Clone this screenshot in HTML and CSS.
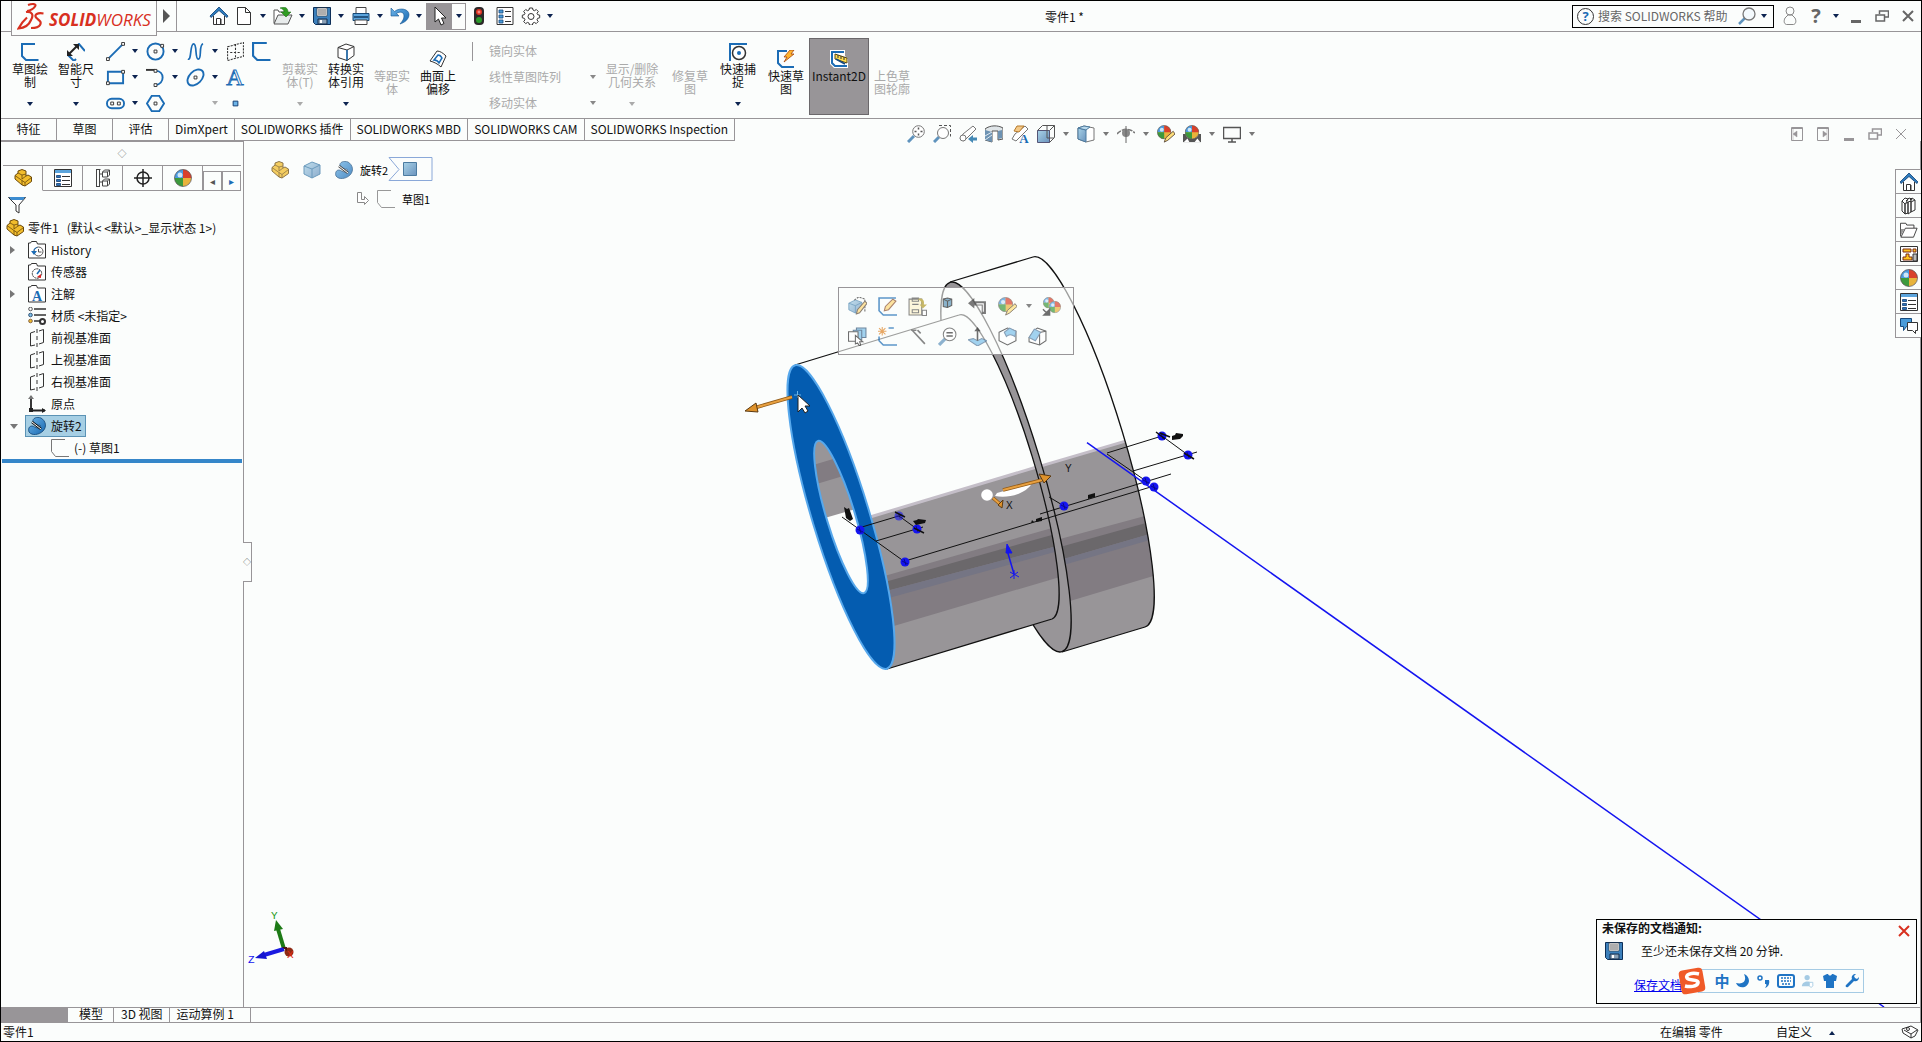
FILE: index.html
```html
<!DOCTYPE html>
<html lang="zh-CN">
<head>
<meta charset="utf-8">
<title>零件1</title>
<link rel="stylesheet" href="styles.css">
</head>
<body>
<svg class="sprite" aria-hidden="true">
  <defs>
    <linearGradient id="steel" x1="0" y1="0" x2="1" y2="1"><stop offset="0" stop-color="#a9d3e8"/><stop offset="1" stop-color="#6b93bd"/></linearGradient>
    <linearGradient id="sky" x1="0" y1="0" x2="1" y2="1"><stop offset="0" stop-color="#6cb4e8"/><stop offset="1" stop-color="#1767b0"/></linearGradient>
  </defs>
  <symbol id="i-down" viewBox="0 0 8 5"><path d="M1 0h6L4 4z" fill="currentColor"/></symbol>
  <symbol id="i-home" viewBox="0 0 18 18"><path d="M3.500 9v8.500h11V9" fill="#fff" stroke="#333"/><path d="M6.500 17.500v-6h4v6M11 17v-5" fill="none" stroke="#333"/><path d="M0 9 9 0l9 9-1 1.500-8-7-8 7z" fill="#2d7cbd" stroke="#0d3c72" stroke-width=".8"/></symbol>
  <symbol id="i-new" viewBox="0 0 18 18"><path d="M2.500.500h8l5 5v12h-13z" fill="#fff" stroke="#333"/><path d="M10.500.500v5h5" fill="none" stroke="#333"/></symbol>
  <symbol id="i-open" viewBox="0 0 20 18"><path d="M1 16V3h4l1 2h7v3" fill="#fff" stroke="#555"/><path d="M1 17 5 8h14l-4 9z" fill="#e8ecec" stroke="#555"/><path d="M7 1c5-2 8 0 8 4h3l-5 5-5-5h3c0-2-1-3-4-4z" fill="#2f9c22" stroke="#14630c" stroke-width=".5"/></symbol>
  <symbol id="i-save" viewBox="0 0 18 18"><path d="M.500.500h17v17h-15l-2-2z" fill="#3c80bb" stroke="#0d2f57"/><path d="M4 1h10v8H4z" fill="#fff" stroke="#333" stroke-width=".6"/><path d="M5 3h8M5 5h8M5 7h8" stroke="#333" stroke-width=".8"/><path d="M5 12h9v5H5z" fill="#8aa0b5" stroke="#122c4c"/><path d="M7 13h2v3H7z" fill="#fff"/></symbol>
  <symbol id="i-print" viewBox="0 0 18 18"><path d="M4 6V.500h10V6" fill="#fff" stroke="#444"/><path d="M1 6.500h16v7H1z" fill="#5ba4dc" stroke="#164876"/><path d="M2 10h14" stroke="#123c66" stroke-width="1.500"/><path d="M3 13h12v4.500H3z" fill="#fff" stroke="#444"/></symbol>
  <symbol id="i-undo" viewBox="0 0 18 18"><path d="M0 1v8h8L5.500 6.500C9 4 13 5 13 9c0 3-1.500 5-4 8 5-1.500 9-5 9-9.500C18 2 9 0 3.500 4.500z" fill="url(#sky)" stroke="#14548f" stroke-width=".6"/></symbol>
  <symbol id="i-pointer" viewBox="0 0 14 20"><path d="M2 1v15l3.500-3 2.500 6 3-1.500L8.500 12H13z" fill="#fff" stroke="#222"/></symbol>
  <symbol id="i-light" viewBox="0 0 12 18"><rect x="1" y="0" width="10" height="18" rx="4" fill="#2c2929"/><circle cx="6" cy="5" r="3" fill="#e23322"/><circle cx="6" cy="13" r="3" fill="#2b9a2b"/><path d="M4.500 5h3M6 3.500v3" stroke="#fbb" stroke-width=".8"/></symbol>
  <symbol id="i-list" viewBox="0 0 18 18"><path d="M1 .500h16v17H1z" fill="#fff" stroke="#333"/><path d="M3 3h4v3H3zM3 8h4v3H3zM3 13h4v3H3z" fill="#4a9bd8" stroke="#174a7d" stroke-width=".8"/><path d="M9 4.500h6M9 9.500h6M9 14.500h6" stroke="#333"/></symbol>
  <symbol id="i-gear" viewBox="0 0 18 18"><path d="M7.500 1h3l.5 2 1.500.700L14.300 2.500l2 2L15 6.300l.7 1.400 2 .5v2.600l-2 .5-.7 1.500 1.200 1.800-2 2-1.800-1.200-1.500.700-.5 2H7.500l-.5-2-1.500-.700-1.800 1.200-2-2L3 12.800l-.7-1.500-2-.5V8.200l2-.5L3 6.300 1.700 4.500l2-2L5.500 3.700 7 3z" fill="#fff" stroke="#333"/><circle cx="9" cy="9.500" r="3" fill="none" stroke="#333"/></symbol>
  <symbol id="i-sketch" viewBox="0 0 18 18"><path d="M14 1H1v12l4 4h12.500" fill="none" stroke="#1b6cb5" stroke-width="2"/></symbol>
  <symbol id="i-sketch-thin" viewBox="0 0 18 18"><path d="M14 .500H.500v12l4 5H18" fill="none" stroke="#777"/></symbol>
  <symbol id="i-dim" viewBox="0 0 18 18"><path d="m10 3 2-2 6 7M0 11l7 7 2-2" fill="none" stroke="#1b6cb5" stroke-width="2"/><path d="m2 11 8-8" stroke="#222" stroke-width="2"/><path d="M0 13V7l6 6zM12 1v6L6 1z" fill="#222"/></symbol>
  <symbol id="i-line" viewBox="0 0 20 20"><path d="M2 18 18 2" stroke="#1b6cb5" stroke-width="2"/><path d="M.500 16.500h3v3h-3zM16.500.500h3v3h-3z" fill="#fff" stroke="#333"/></symbol>
  <symbol id="i-circle" viewBox="0 0 20 20"><circle cx="10" cy="10" r="8.500" fill="none" stroke="#1b6cb5" stroke-width="2"/><path d="M8.500 8.500h3v3h-3zM15.500 2.500h3v3h-3z" fill="#fff" stroke="#333"/></symbol>
  <symbol id="i-spline" viewBox="0 0 20 20"><path d="M2 18C6 20 4 2 8 2s1 16 5 16S13 3 18 2" fill="none" stroke="#1b6cb5" stroke-width="1.800"/></symbol>
  <symbol id="i-plane" viewBox="0 0 18 18"><path d="M1.500 4.500 16.500.500v13l-15 4z" fill="none" stroke="#333" stroke-dasharray="2 1"/><path d="M9 2v14M4 10h10" stroke="#333" stroke-dasharray="2 1.500"/></symbol>
  <symbol id="i-rect" viewBox="0 0 20 20"><path d="M2 4h16v12H2z" fill="none" stroke="#1b6cb5" stroke-width="2"/><path d="M.500 14.500h3v3h-3zM16.500 2.500h3v3h-3z" fill="#fff" stroke="#333"/></symbol>
  <symbol id="i-arc" viewBox="0 0 20 20"><path d="M10 3c10 0 10 14 0 15" fill="none" stroke="#1b6cb5" stroke-width="2"/><path d="M0 2h10" stroke="#333" stroke-width="2"/><path d="M8.500 1.500h3v3h-3zM8.500 16.500h3v3h-3z" fill="#fff" stroke="#333"/></symbol>
  <symbol id="i-ellipse" viewBox="0 0 20 20"><ellipse cx="10" cy="10" rx="10" ry="6.500" transform="rotate(-45 10 10)" fill="none" stroke="#1b6cb5" stroke-width="2"/><path d="M8.500 8.500h3v3h-3z" fill="#fff" stroke="#333"/></symbol>
  <symbol id="i-slot" viewBox="0 0 20 20"><rect x="1" y="5" width="18" height="10" rx="5" fill="none" stroke="#1b6cb5" stroke-width="2"/><path d="M5 8.500h3v3H5zM12 8.500h3v3h-3z" fill="#fff" stroke="#333"/></symbol>
  <symbol id="i-poly" viewBox="0 0 20 20"><path d="M6 2h8l5 8-5 8H6l-5-8z" fill="none" stroke="#1b6cb5" stroke-width="2"/><path d="M8.500 8.500h3v3h-3z" fill="#fff" stroke="#333"/></symbol>
  <symbol id="i-point" viewBox="0 0 20 20"><path d="M7.500 7.500h5v5h-5z" fill="#6cb4e8" stroke="#123c72"/></symbol>
  <symbol id="i-cube" viewBox="0 0 18 18"><path d="M1 4.500 9 1l8 2.500v9L10 17.500l-9-3z" fill="#fff" stroke="#333"/><path d="M1 4.500 10 7l7-3.500M10 7v10.500" fill="none" stroke="#333"/><path d="M10 7v10" stroke="#1b6cb5" stroke-width="1.500"/></symbol>
  <symbol id="i-surf" viewBox="0 0 18 18"><path d="M1 11 8 1c3 0 6 2 9 5l-5 11C9 14 5 12 1 11z" fill="#fff" stroke="#333"/><path d="M5 10l4-5c2 0 3 1 4 3l-3 5c-1-2-3-3-5-3z" fill="#fff" stroke="#1b6cb5" stroke-width="1.500"/></symbol>
  <symbol id="i-snap" viewBox="0 0 18 18"><path d="M18 1H1v17" fill="none" stroke="#1b6cb5" stroke-width="2"/><circle cx="10" cy="10" r="6.500" fill="#fff" stroke="#333" stroke-width="1.500"/><circle cx="10" cy="10" r="2" fill="#1b6cb5"/></symbol>
  <symbol id="i-quick" viewBox="0 0 18 18"><path d="M10 1H1v12l4 4h12" fill="none" stroke="#1b6cb5" stroke-width="2"/><path d="M13 0h4l-3 4h3L7 12l3-5H7z" fill="#ffb52e" stroke="#a3420c" stroke-width=".8"/></symbol>
  <symbol id="i-instant" viewBox="0 0 18 18"><path d="M0 0h15v6l3 3v9H4l-4-4z" fill="#fff"/><path d="M14 2H2v11l3 3h12" fill="none" stroke="#1b6cb5" stroke-width="2"/><path d="m5 4 12 4v5L5 9z" fill="#ffdc4c" stroke="#5b4914"/><path d="M8 5v3M11 6v3M14 7v3" stroke="#333"/><path d="m6 9 9 5" stroke="#174a7d" stroke-width="2"/></symbol>
  <symbol id="i-zoomfit" viewBox="0 0 18 18"><path d="M1 17l6-6" stroke="#5f93bd" stroke-width="3"/><circle cx="11.500" cy="6.500" r="5.800" fill="#fff" stroke="#777"/><path d="M11.500 2.500v2M11.500 8.500v2M7.500 6.500h2M13.500 6.500h2" stroke="#555" stroke-width="1.500"/></symbol>
  <symbol id="i-zoomarea" viewBox="0 0 18 18"><path d="M6 .500h11.500v11" fill="none" stroke="#555" stroke-dasharray="3 2"/><path d="M1 17l5-5" stroke="#5f93bd" stroke-width="3"/><circle cx="10" cy="8" r="5.500" fill="#fff" stroke="#777"/></symbol>
  <symbol id="i-prev" viewBox="0 0 18 18"><path d="m1 14 3-5L14 1l3 3-8 8-4 4z" fill="#fff" stroke="#777"/><circle cx="4" cy="13" r="3" fill="#fff" stroke="#777"/><path d="M18 14h-4" stroke="#4589b5" stroke-width="3"/><path d="m9 14 5-4v8z" fill="#4589b5"/></symbol>
  <symbol id="i-section" viewBox="0 0 18 18"><path d="M0 4c5-4 13-4 18-1v11l-5 1V6H7v11l-7-2z" fill="#dfe5e8" stroke="#555"/><path d="M0 5l7 2v10l-7-2zM13 6l4-1v8l-4 1z" fill="#6d93b3"/><path d="m0 11 7-4M0 15l7-5" stroke="#dfe9f0"/></symbol>
  <symbol id="i-orient" viewBox="0 0 18 18"><path d="M.500 5.500h12v12H.500z" fill="url(#steel)" stroke="#557"/><path d="m.500 5.500 5-5h12v12l-5 5M12.500 5.500l5-5M10 1v12h7" fill="none" stroke="#555"/></symbol>
  <symbol id="i-shaded" viewBox="0 0 18 18"><path d="m1 3 6-2 10 2v12l-8 2-8-3z" fill="#fff" stroke="#777"/><path d="m1 3 8 2v12l-8-3z" fill="url(#steel)" stroke="#4c7ba0"/><path d="m1 3 6-2 6 1-4 3z" fill="#b7d8ec" stroke="#4c7ba0"/></symbol>
  <symbol id="i-eye" viewBox="0 0 18 18"><path d="M0 9c5-6 13-6 18-1" fill="none" stroke="#777" stroke-width="1.500" stroke-dasharray="5 1"/><circle cx="9" cy="8" r="4" fill="#888"/><path d="M9 1v17" stroke="#666"/></symbol>
  <symbol id="i-ball" viewBox="0 0 18 18"><circle cx="9" cy="9" r="8.500" fill="#e8b33c"/><path d="M9 9V.500a8.500 8.500 0 0 0-8.500 8.500z" fill="#4a9be0"/><path d="M9 9V.500A8.500 8.500 0 0 1 17.500 9z" fill="#d9402b"/><path d="M.500 9a8.500 8.500 0 0 0 8.500 8.500V9z" fill="#3c9a3c"/><circle cx="6" cy="6" r="2.500" fill="#cfe6f7"/><circle cx="9" cy="9" r="8.500" fill="none" stroke="#556" stroke-width=".7"/></symbol>
  <symbol id="i-ballpen" viewBox="0 0 20 20"><use href="#i-ball" width="16" height="16"/><path d="m8 19 2-5 8-7 2 3-8 7z" fill="#ffe07a" stroke="#5a4a3a"/></symbol>
  <symbol id="i-scene" viewBox="0 0 20 20"><path d="M0 10h20v9H0z" fill="#555"/><path d="M3 11h4l-2 3zM13 11h4l-2 3zM1 19l4-4 2 4zM13 19l3-4 3 4z" fill="#fff"/><use href="#i-ball" x="2" width="16" height="16"/></symbol>
  <symbol id="i-monitor" viewBox="0 0 18 18"><path d="M.500 2.500h17v11H.500zM9 14v3M5 17h8" fill="none" stroke="#555" stroke-width="1.500"/></symbol>
  <symbol id="i-part" viewBox="0 0 18 18"><path d="M1 6.500 4 4V2l4-1.500L12 2v5l2-1 3.500 2v4.500L11 17l-3-1-7-6z" fill="#f2bd2c" stroke="#6b4a0c"/><path d="m1 6.500 7 5V16M4 4l4 2 4-1M8 6v4l4-3M8 11.500l3 2 6.500-5M11 13.500V17" fill="none" stroke="#6b4a0c" stroke-width=".8"/></symbol>
  <symbol id="i-props" viewBox="0 0 18 18"><path d="M.500.500h17v17H.500z" fill="#fff" stroke="#333"/><path d="M1 1h16v3H1z" fill="#5ba4dc"/><path d="M2.500 6.500h4v2h-4zM2.500 10.500h4v2h-4zM2.500 14.500h4v2h-4z" fill="#2b72b8" stroke="#123c72" stroke-width=".8"/><path d="M8 7.500h8M8 11.500h8M8 15.500h8" stroke="#333"/></symbol>
  <symbol id="i-config" viewBox="0 0 18 18"><path d="M2.500.500h4M2.500 0v18M5.500 0v18M2 17.500h4M6 5h3M6 13h3" fill="none" stroke="#444"/><path d="m8.500 3 2-2h5v5l-2 2h-5zM8.500 12l2-2h5v5l-2 2h-5zM8.500 3h5v5M13.500 3l2-2M8.500 12h5v5M13.500 12l2-2" fill="none" stroke="#444"/></symbol>
  <symbol id="i-target" viewBox="0 0 18 18"><circle cx="9" cy="9" r="6" fill="none" stroke="#222" stroke-width="1.500"/><path d="M9 0v18M0 9h18" stroke="#222" stroke-width="1.500"/></symbol>
  <symbol id="i-filter" viewBox="0 0 18 18"><path d="M.500 1.500h17L11 9v8l-3-2V9z" fill="#fff" stroke="#333"/><path d="M1 1h16l-2 3H3z" fill="#3c8cd0"/></symbol>
  <symbol id="i-folder" viewBox="0 0 18 18"><path d="M.500 17V2h2l1-1.500h5L9.500 3h8v14z" fill="#fff" stroke="#333"/></symbol>
  <symbol id="i-history" viewBox="0 0 18 18"><use href="#i-folder"/><circle cx="10.500" cy="10.500" r="4.500" fill="#fff" stroke="#555"/><path d="M10.500 8v3h3" fill="none" stroke="#555"/><path d="M3 10h6l-3 4zM5 10c1-3 3-4 5-4" fill="#1b6cb5"/></symbol>
  <symbol id="i-sensor" viewBox="0 0 18 18"><use href="#i-folder"/><circle cx="9" cy="10.500" r="4.700" fill="#fff" stroke="#333" stroke-dasharray="2 .6"/><path d="m9 11 3-4" stroke="#1b6cb5" stroke-width="1.500"/><path d="m9 14 4-3v4z" fill="#d22"/></symbol>
  <symbol id="i-material" viewBox="0 0 18 18"><path d="M6 2h12M6 8h12M6 14h8" stroke="#333" stroke-width="1.500"/><circle cx="2.500" cy="2" r="1.800" fill="#fff" stroke="#555"/><circle cx="2.500" cy="8" r="1.800" fill="#7cc0ea" stroke="#357"/><circle cx="2.500" cy="14" r="1.800" fill="#f2bd2c" stroke="#864"/><circle cx="14.500" cy="14.500" r="2.500" fill="#fff" stroke="#333" stroke-width="2"/></symbol>
  <symbol id="i-refplane" viewBox="0 0 18 18"><path d="M7 2.500 2.500 4v13L7 16M11 2 15.500.500v13L11 15" fill="none" stroke="#333"/><path d="M9 0v18" stroke="#333" stroke-dasharray="4 3"/></symbol>
  <symbol id="i-origin" viewBox="0 0 18 18"><path d="M3 1v14.500h14" fill="none" stroke="#222" stroke-width="1.800"/><path d="m0 4 3-4 3 4z" fill="#777"/><path d="m14 13 4 2.500-4 2.500zM1 13h4v4H1z" fill="#222"/></symbol>
  <symbol id="i-revolve" viewBox="0 0 18 18"><path d="M5 5C4 1 9-.500 13 1c5 3 6 9 2 13-4 4-11 5-14 1-1-3 0-6 3-6 2 0 3 2 6 2 2-.500 3-2 2-3-2 1-6-1-7-3z" fill="url(#sky)" stroke="#0f4273" stroke-width=".8"/><path d="m4 5 9 7" stroke="#111" stroke-width="2.500"/><path d="m4 5 9 7" stroke="#fff"/></symbol>
  <symbol id="i-solid" viewBox="0 0 18 18"><path d="m1 5 8-4 8 3v9l-8 4-8-4z" fill="url(#steel)" stroke="#3d7ba8"/><path d="m1 5 8 3 8-4M9 8v9" fill="none" stroke="#3d7ba8"/></symbol>
  <symbol id="i-books" viewBox="0 0 18 18"><path d="m2 4 3 3v10l-3-3zM5 7l3-2v11l-3 1zM8 5v12l3-2V4zM11 15l4-2V3l-4 2zM2 4l3-3 3 1-2 4M6 4l3-3 3 1-2 3M10 3l2-2 3 2" fill="#fff" stroke="#333"/></symbol>
  <symbol id="i-folderopen" viewBox="0 0 20 18"><path d="M.500 16V1.500h6l1 2h8V7" fill="#fff" stroke="#333"/><path d="m1 17 5-10h13l-4 10z" fill="#fff" stroke="#333"/><path d="M1 8h4l-4 7z" fill="#999"/></symbol>
  <symbol id="i-palette" viewBox="0 0 18 18"><path d="M.500 1.500h17v15H.500z" fill="#fff" stroke="#333"/><path d="M3 4h8v3H3zM13 4h3v3h-3zM6 9h3v3h3v3H3v-3h3z" fill="#ffc41f" stroke="#7b2a16"/><path d="M13 9h4v7h-4z" fill="#bbb" stroke="#333"/></symbol>
  <symbol id="i-chat" viewBox="0 0 18 18"><path d="M.500 1.500h11v8h-5l-3 4v-4h-3z" fill="#4a9bd8" stroke="#174a7d"/><path d="M7.500 5.500h10v8h-2v3l-3-3h-5z" fill="#fff" stroke="#333"/></symbol>
  <symbol id="i-loupe" viewBox="0 0 18 18"><path d="m1 17 6-6" stroke="#5f93bd" stroke-width="2.500"/><circle cx="11" cy="7" r="6" fill="#f4fafd" stroke="#777" stroke-width="1.300"/></symbol>
  <symbol id="i-user" viewBox="0 0 14 20"><circle cx="7" cy="5" r="4" fill="none" stroke="#888"/><path d="M3.500 18.500C1 18 .500 15 2 12l3-3h4l3 3c1.500 3 1 6-1.500 6.500z" fill="none" stroke="#888"/></symbol>
  <symbol id="i-min" viewBox="0 0 14 14"><path d="M2 11h10v3H2z" fill="currentColor"/></symbol>
  <symbol id="i-restore" viewBox="0 0 14 14"><path d="M4.500 5V2h9v6H10M1 6h8.500v6H1z" fill="none" stroke="currentColor" stroke-width="1.500"/></symbol>
  <symbol id="i-close" viewBox="0 0 14 14"><path d="m2 2 10 10M12 2 2 12" stroke="currentColor" stroke-width="2"/></symbol>
  <symbol id="i-x" viewBox="0 0 14 14"><path d="m2 2 10 10M12 2 2 12" stroke="currentColor"/></symbol>
  <symbol id="i-boxl" viewBox="0 0 14 14"><path d="M1.500.500h11v13h-11zM1.500 1.500h11" fill="none" stroke="currentColor"/><path d="M7 4v6L3 7zM3 2v11" fill="currentColor" stroke="currentColor" stroke-width=".5"/></symbol>
  <symbol id="i-boxr" viewBox="0 0 14 14"><path d="M1.500.500h11v13h-11zM1.500 1.500h11" fill="none" stroke="currentColor"/><path d="M7 4v6l4-3zM11 2v11" fill="currentColor" stroke="currentColor" stroke-width=".5"/></symbol>
  <symbol id="i-editfeat" viewBox="0 0 18 18"><use href="#i-solid" y="2" width="14" height="14"/><path d="M6 3 10 0l6 2v12" fill="none" stroke="#333" stroke-dasharray="2 1"/><path d="m8 16 1-4 7-8 2 2-7 9z" fill="#ffd978" stroke="#5a4a3a"/></symbol>
  <symbol id="i-editsk" viewBox="0 0 18 18"><path d="M17 1H1v12l4 4h13" fill="none" stroke="#1b6cb5" stroke-width="1.500"/><path d="m6 13 1-4 7-7 3 2-7 8z" fill="#ffd978" stroke="#8a5030"/></symbol>
  <symbol id="i-paste" viewBox="0 0 18 18"><path d="M1 2h12v15H1zM4 1h6v3H4zM4 7h6M4 12h6v3H4z" fill="#fff5cf" stroke="#555"/><path d="M9 2c4-2 7 1 6 5h3l-4 4-3-4h2c0-2-1-4-4-5z" fill="#b09a28"/><path d="M13.500 12.500h4v5h-4z" fill="#fff" stroke="#555"/></symbol>
  <symbol id="i-suppress" viewBox="0 0 18 18"><path d="m5 2 4-1 4 1v6l-4 2-4-1z" fill="#5b93b5" stroke="#222"/><path d="m5 2 4 2 4-2M9 4v6" fill="none" stroke="#222"/></symbol>
  <symbol id="i-rollback" viewBox="0 0 18 18"><path d="m0 6 6-5v3h11v12h-4V8H6v3z" fill="#444"/><path d="M8 6h7v8h-1V7H8z" fill="#fff"/></symbol>
  <symbol id="i-balls" viewBox="0 0 20 20"><use href="#i-ball" x="1" width="12" height="12"/><use href="#i-ball" x="7" y="4" width="13" height="13"/><path d="m1 13 5 5M8 13v6H2z" stroke="#333" stroke-width="1.500" fill="#333"/></symbol>
  <symbol id="i-selother" viewBox="0 0 18 18"><path d="M8 1h9v9H8z" fill="#7cc0ea" stroke="#357"/><path d="M5 3h8v9H5z" fill="#7cc0ea" stroke="#357"/><path d="M.500 4.500h9v9h-9z" fill="#fff" stroke="#333"/><path d="M7 8v8l2-1 2 3 1-1-1-3h3z" fill="#fff" stroke="#333"/></symbol>
  <symbol id="i-sknew" viewBox="0 0 18 18"><path d="M10 1h5M1 9v4l4 4h13" fill="none" stroke="#1b6cb5" stroke-width="1.500"/><path d="M4 0v8M0 4h8M1 1l6 6M7 1 1 7" stroke="#e08424"/></symbol>
  <symbol id="i-mate" viewBox="0 0 18 18"><path d="M4 3 16 16M3 3h5M9 3l3 3" stroke="#555" stroke-width="1.500"/></symbol>
  <symbol id="i-zoomsel" viewBox="0 0 18 18"><path d="m1 17 6-6" stroke="#5f93bd" stroke-width="3"/><circle cx="11" cy="7" r="6" fill="#fff" stroke="#555"/><path d="M8 5.500h6M8 8.500h6" stroke="#333" stroke-width="1.500"/></symbol>
  <symbol id="i-normal" viewBox="0 0 18 18"><path d="M0 12l5-1 4 2 4-2 5 2-9 5z" fill="#7cc0ea" stroke="#579"/><path d="M9 13V2" stroke="#333" stroke-width="1.500"/><path d="m6 4 3-4 3 4z" fill="#333"/></symbol>
  <symbol id="i-topface" viewBox="0 0 18 18"><path d="m1 5 8-4 8 3v9l-8 4-8-4z" fill="#fff" stroke="#333"/><path d="m6 5 5-4 6 3-1 5c-3-2-6-2-8 0z" fill="#7cc0ea" stroke="#579"/></symbol>
  <symbol id="i-sideface" viewBox="0 0 18 18"><path d="m1 10 5-7 3-2 8 3v9l-6 4-10-3z" fill="#fff" stroke="#333"/><path d="m1 10 5-8 6 3-5 8z" fill="#7cc0ea" stroke="#579"/><path d="M11 7v10M12 5l5-1" stroke="#333"/></symbol>
  <symbol id="i-kb" viewBox="0 0 18 14"><rect x="1" y="1" width="16" height="12" rx="2" fill="none" stroke="#1f74c4" stroke-width="2"/><path d="M4 4h10M4 7h10M5 10h8" stroke="#1f74c4" stroke-width="1.500" stroke-dasharray="2 1"/></symbol>
  <symbol id="i-moon" viewBox="0 0 14 14"><path d="M9 0c3 6 0 11-8 9 2 6 12 6 13-2 0-3-2-6-5-7z" fill="#1f74c4"/></symbol>
  <symbol id="i-punct" viewBox="0 0 14 14"><circle cx="3" cy="4" r="2" fill="none" stroke="#1f74c4" stroke-width="1.500"/><path d="M8 6h4c1 4-1 7-4 8 1-2 2-3 1-4H8z" fill="#1f74c4"/></symbol>
  <symbol id="i-person" viewBox="0 0 14 16"><circle cx="6" cy="4" r="3" fill="#a5cbe4"/><path d="M0 14c0-7 12-7 12-1v1z" fill="#a5cbe4"/><path d="M8.500 9.500h4v4l-2 2-2-2z" fill="#fff" stroke="#a5cbe4"/></symbol>
  <symbol id="i-shirt" viewBox="0 0 14 14"><path d="M4 0h1c1 2 3 2 4 0h1l4 2-1 5h-2v7H3V7H1L0 2z" fill="#1f74c4"/></symbol>
  <symbol id="i-wrench" viewBox="0 0 14 14"><path d="m1 11 6-6c-1-3 1-5 4-5L9 2l1 2 2 1 2-2c0 4-3 5-5 4l-6 6c-2 1-3-1-2-2z" fill="#1f74c4"/></symbol>
</svg>

<header class="titlebar">
  <div class="brand">
    <svg class="ds" viewBox="0 0 27 28" aria-hidden="true"><path d="M11 3c4-1.500 9-1.500 7 1.500-2 3-5 4-8 4.500M9 10c6-1 8 3 5 8-2 5-7 8-12.500 8.500C4 22 6 19 10 15.500M26.500 11.500c-6-1-9.500 1-7.500 4 3 3 6 4 4 7.500-1 2-5 3-9 3" fill="none" stroke="#d8301f" stroke-width="2.200"/></svg>
    <span class="wordmark"><b>SOLID</b>WORKS</span>
  </div>
  <button class="expand" aria-label="展开菜单"></button>
  <nav class="quick">
    <button class="q home" aria-label="主页"><svg><use href="#i-home"/></svg></button>
    <button class="q" aria-label="新建"><svg><use href="#i-new"/></svg></button><button class="dd" aria-label="新建选项"><svg><use href="#i-down"/></svg></button>
    <button class="q" aria-label="打开"><svg><use href="#i-open"/></svg></button><button class="dd" aria-label="打开选项"><svg><use href="#i-down"/></svg></button>
    <button class="q" aria-label="保存"><svg><use href="#i-save"/></svg></button><button class="dd" aria-label="保存选项"><svg><use href="#i-down"/></svg></button>
    <button class="q" aria-label="打印"><svg><use href="#i-print"/></svg></button><button class="dd" aria-label="打印选项"><svg><use href="#i-down"/></svg></button>
    <button class="q" aria-label="撤销"><svg><use href="#i-undo"/></svg></button><button class="dd" aria-label="撤销选项"><svg><use href="#i-down"/></svg></button>
    <span class="pick"><button class="q on" aria-label="选择"><svg><use href="#i-pointer"/></svg></button><button class="dd" aria-label="选择选项"><svg><use href="#i-down"/></svg></button></span>
    <button class="q" aria-label="重建"><svg><use href="#i-light"/></svg></button>
    <button class="q wide" aria-label="文件属性"><svg><use href="#i-list"/></svg></button>
    <button class="q" aria-label="选项"><svg><use href="#i-gear"/></svg></button><button class="dd" aria-label="更多选项"><svg><use href="#i-down"/></svg></button>
  </nav>
  <h1 class="doc-title">零件1 *</h1>
  <div class="title-end">
    <form class="search"><span class="q-mark">?</span><input type="text" aria-label="搜索" placeholder="搜索 SOLIDWORKS 帮助"><svg class="i18"><use href="#i-loupe"/></svg><svg class="caret"><use href="#i-down"/></svg></form>
    <button class="wb user" aria-label="登录"><svg><use href="#i-user"/></svg></button>
    <button class="wb help" aria-label="帮助">?</button><button class="dd" aria-label="帮助选项"><svg><use href="#i-down"/></svg></button>
    <button class="wb" aria-label="最小化"><svg><use href="#i-min"/></svg></button>
    <button class="wb" aria-label="还原"><svg><use href="#i-restore"/></svg></button>
    <button class="wb" aria-label="关闭"><svg><use href="#i-close"/></svg></button>
  </div>
</header>

<section class="ribbon">
  <button class="big"><svg><use href="#i-sketch"/></svg><span>草图绘<br>制</span><i class="caret-box"><svg><use href="#i-down"/></svg></i></button>
  <button class="big"><svg><use href="#i-dim"/></svg><span>智能尺<br>寸</span><i class="caret-box"><svg><use href="#i-down"/></svg></i></button>
  <div class="tools">
    <button aria-label="直线"><svg><use href="#i-line"/></svg></button><svg class="caret"><use href="#i-down"/></svg>
    <button aria-label="圆"><svg><use href="#i-circle"/></svg></button><svg class="caret"><use href="#i-down"/></svg>
    <button aria-label="样条曲线"><svg><use href="#i-spline"/></svg></button><svg class="caret"><use href="#i-down"/></svg>
    <button aria-label="基准面"><svg><use href="#i-plane"/></svg></button>
    <button aria-label="草图"><svg><use href="#i-sketch"/></svg></button>
    <button aria-label="矩形"><svg><use href="#i-rect"/></svg></button><svg class="caret"><use href="#i-down"/></svg>
    <button aria-label="圆弧"><svg><use href="#i-arc"/></svg></button><svg class="caret"><use href="#i-down"/></svg>
    <button aria-label="椭圆"><svg><use href="#i-ellipse"/></svg></button><svg class="caret"><use href="#i-down"/></svg>
    <button class="letter">A</button><span></span>
    <button aria-label="槽口"><svg><use href="#i-slot"/></svg></button><svg class="caret"><use href="#i-down"/></svg>
    <button aria-label="多边形"><svg><use href="#i-poly"/></svg></button><span></span>
    <span></span><svg class="caret dim"><use href="#i-down"/></svg>
    <button aria-label="点"><svg><use href="#i-point"/></svg></button><span></span>
  </div>
  <button class="big off noicon" disabled><span>剪裁实<br>体(T)</span><i class="caret-box"><svg><use href="#i-down"/></svg></i></button>
  <button class="big"><svg><use href="#i-cube"/></svg><span>转换实<br>体引用</span><i class="caret-box"><svg><use href="#i-down"/></svg></i></button>
  <button class="big off mid noicon" disabled><span>等距实<br>体</span></button>
  <button class="big mid"><svg><use href="#i-surf"/></svg><span>曲面上<br>偏移</span></button>
  <div class="rule"></div>
  <div class="lines off">
    <button disabled>镜向实体</button>
    <button disabled>线性草图阵列<svg class="caret"><use href="#i-down"/></svg></button>
    <button disabled>移动实体<svg class="caret"><use href="#i-down"/></svg></button>
  </div>
  <button class="big off noicon relations" disabled><span>显示/删除<br>几何关系</span><i class="caret-box"><svg><use href="#i-down"/></svg></i></button>
  <button class="big off mid noicon" disabled><span>修复草<br>图</span></button>
  <button class="big snap"><svg><use href="#i-snap"/></svg><span>快速捕<br>捉</span><i class="caret-box"><svg><use href="#i-down"/></svg></i></button>
  <button class="big mid"><svg><use href="#i-quick"/></svg><span>快速草<br>图</span></button>
  <button class="big mid active"><svg><use href="#i-instant"/></svg><span>Instant2D</span></button>
  <button class="big off mid noicon" disabled><span>上色草<br>图轮廓</span></button>
</section>

<div class="tabrow">
  <nav class="tabs">
    <button>特征</button><button class="current">草图</button><button>评估</button><button>DimXpert</button><button>SOLIDWORKS 插件</button><button>SOLIDWORKS MBD</button><button>SOLIDWORKS CAM</button><button>SOLIDWORKS Inspection</button>
  </nav>
  <div class="hud">
    <button aria-label="整屏显示全图"><svg><use href="#i-zoomfit"/></svg></button>
    <button aria-label="局部放大"><svg><use href="#i-zoomarea"/></svg></button>
    <button aria-label="上一视图"><svg><use href="#i-prev"/></svg></button>
    <button aria-label="剖面视图"><svg><use href="#i-section"/></svg></button>
    <button aria-label="动态注解"><svg viewBox="0 0 18 18"><path d="m1 14 3-5L14 1l3 3-8 8-4 4z" fill="#fff" stroke="#777"/><path d="m3 6 3-5h7l-5 6z" fill="#f4c987" stroke="#b57a2d"/><text x="13" y="18" text-anchor="middle" class="serif-a" font-size="13">A</text></svg></button>
    <button aria-label="视图定向"><svg><use href="#i-orient"/></svg></button><svg class="caret"><use href="#i-down"/></svg>
    <button aria-label="显示样式"><svg><use href="#i-shaded"/></svg></button><svg class="caret"><use href="#i-down"/></svg>
    <button aria-label="隐藏项目"><svg><use href="#i-eye"/></svg></button><svg class="caret"><use href="#i-down"/></svg>
    <button aria-label="编辑外观"><svg><use href="#i-ballpen"/></svg></button>
    <button aria-label="应用布景"><svg><use href="#i-scene"/></svg></button><svg class="caret"><use href="#i-down"/></svg>
    <button aria-label="视图设定"><svg><use href="#i-monitor"/></svg></button><svg class="caret"><use href="#i-down"/></svg>
  </div>
  <div class="docwin">
    <button aria-label="左侧窗格"><svg><use href="#i-boxl"/></svg></button>
    <button aria-label="右侧窗格"><svg><use href="#i-boxr"/></svg></button>
    <button aria-label="最小化文档"><svg><use href="#i-min"/></svg></button>
    <button aria-label="还原文档"><svg><use href="#i-restore"/></svg></button>
    <button aria-label="关闭文档"><svg><use href="#i-x"/></svg></button>
  </div>
</div>

<main class="work">
  <aside class="side">
    <div class="grip">◇</div>
    <nav class="sidetabs">
      <button class="current" aria-label="设计树"><svg><use href="#i-part"/></svg></button>
      <button aria-label="属性"><svg><use href="#i-props"/></svg></button>
      <button aria-label="配置"><svg><use href="#i-config"/></svg></button>
      <button aria-label="尺寸专家"><svg><use href="#i-target"/></svg></button>
      <button aria-label="外观"><svg><use href="#i-ball"/></svg></button>
      <span class="scroll"><button aria-label="向左">◂</button><button class="blue" aria-label="向右">▸</button></span>
    </nav>
    <div class="filter"><svg class="i18"><use href="#i-filter"/></svg></div>
    <div class="root"><svg class="i18"><use href="#i-part"/></svg><span>零件1&nbsp;&nbsp; (默认&lt; &lt;默认&gt;_显示状态 1&gt;)</span></div>
    <ul class="tree">
      <li><i class="tw"></i><span class="node"><svg><use href="#i-history"/></svg>History</span></li>
      <li><span class="node"><svg><use href="#i-sensor"/></svg>传感器</span></li>
      <li><i class="tw"></i><span class="node"><svg viewBox="0 0 18 18"><use href="#i-folder" width="18" height="18"/><text x="9" y="16" text-anchor="middle" class="serif-a" font-size="14">A</text></svg>注解</span></li>
      <li><span class="node"><svg><use href="#i-material"/></svg>材质 &lt;未指定&gt;</span></li>
      <li><span class="node"><svg><use href="#i-refplane"/></svg>前视基准面</span></li>
      <li><span class="node"><svg><use href="#i-refplane"/></svg>上视基准面</span></li>
      <li><span class="node"><svg><use href="#i-refplane"/></svg>右视基准面</span></li>
      <li><span class="node"><svg><use href="#i-origin"/></svg>原点</span></li>
      <li><i class="tw open"></i><span class="node selected"><svg><use href="#i-revolve"/></svg>旋转2</span></li>
      <li class="child"><span class="node"><svg><use href="#i-sketch-thin"/></svg>(-) 草图1</span></li>
    </ul>
    <div class="rollbar"></div>
    <button class="handle" aria-label="收起">◇</button>
  </aside>

  <section class="view">
    <svg class="scene" viewBox="244 141 1676 866" preserveAspectRatio="xMinYMin meet">
      <defs>
        <clipPath id="boss"><path d="M795 365 959 315A28.600 158.900-16.850 0 1 1052 619L887 669z"/></clipPath>
        <clipPath id="flange"><path d="M950 282 1033 257A34.800 193-16.850 0 1 1145 627L1062 652z"/></clipPath>
        <clipPath id="bore"><ellipse cx="841" cy="517" rx="14.300" ry="79.500" transform="rotate(-16.850 841 517)"/></clipPath>
        <clipPath id="ringclip"><ellipse cx="1006" cy="467" rx="34.800" ry="193" transform="rotate(-16.850 1006 467)"/></clipPath>
        <g id="dot"><circle r="4.500" fill="#1414f0"/><path d="M-3-1l6 3M-1-3l2 6" stroke="#0a0a8c"/></g>
      </defs>
      <g clip-path="url(#flange)">
        <path d="M1000 478 1160 431V700H1000z" fill="#989598"/>
        <path d="M1000 478 1160 431" stroke="#c4bec8" stroke-width="3"/>
        <path d="M1060 539 1160 512V574L1060 604z" fill="#827c82"/>
        <path d="M1060 547 1160 519V531L1060 560z" fill="#6b686b"/>
        <path d="M1060 560 1160 531V537L1060 566z" fill="#757584"/>
      </g>
      <path d="M950 282 1033 257A34.800 193-16.850 0 1 1145 627L1062 652" fill="none" stroke="#111" stroke-width="1.300"/>
      <ellipse cx="1006" cy="467" rx="34.800" ry="193" transform="rotate(-16.850 1006 467)" fill="#989598"/>
      <path d="M900 288h180v67H900z" fill="#fbfdfc" clip-path="url(#ringclip)"/>
      <ellipse cx="1006" cy="467" rx="34.800" ry="193" transform="rotate(-16.850 1006 467)" fill="none" stroke="#111" stroke-width="1.300"/>
      <path d="M795 365 959 315A28.600 158.900-16.850 0 1 1052 619L887 669z" fill="#fbfdfc"/>
      <g clip-path="url(#boss)">
        <path d="M860 520 1080 454V700H860z" fill="#989598"/>
        <path d="M860 520 1080 454" stroke="#c4bec8" stroke-width="3"/>
        <path d="M860 583 1080 520V571L860 636z" fill="#827c82"/>
        <path d="M860 589 1080 527V540L860 598z" fill="#6b686b"/>
        <path d="M860 598 1080 540V545L860 606z" fill="#757584"/>
      </g>
      <path d="M795 365 959 315A28.600 158.900-16.850 0 1 1052 619L887 669" fill="none" stroke="#111" stroke-width="1.300"/>
      <ellipse cx="841" cy="517" rx="28.600" ry="158.500" transform="rotate(-16.850 841 517)" fill="#045cb0" stroke="#57a8ec" stroke-width="2"/>
      <g clip-path="url(#bore)">
        <path d="M800 430h80v170h-80z" fill="#fbfdfc"/>
        <path d="M800 430h80v72l-80 23z" fill="#989598"/>
        <path d="M800 469l60-18v20l-60 18z" fill="#827c82"/>
      </g>
      <ellipse cx="841" cy="517" rx="14.300" ry="79.500" transform="rotate(-16.850 841 517)" fill="none" stroke="#57a8ec" stroke-width="2"/>
      <g fill="none" stroke="#111">
        <path d="M862 527 902 515M876 541 923 527M842 517 905 562M899 516 917 529M905 561 1154 486M1040 514 1171 474M1049 497 1064 506M1107 453 1162 436M1133 471 1197 452M1162 436 1188 455M1107 454 1146 481"/>
      </g>
      <path d="M1087 442.700 1884 1007" stroke="#1414f0" stroke-width="1.500"/>
      <use href="#dot" x="860" y="530"/><use href="#dot" x="917" y="529"/><use href="#dot" x="899" y="516" opacity=".6"/><use href="#dot" x="905" y="562"/><use href="#dot" x="1064" y="506"/><use href="#dot" x="1146" y="481"/><use href="#dot" x="1154" y="487"/><use href="#dot" x="1188" y="455"/><use href="#dot" x="1162" y="436"/>
      <path d="M1160 433l10 4M1156 432l9 7M1184 453l10 6M914 528l10 5M895 512l10 5" stroke="#111" stroke-width="1.500"/>
      <g fill="#111"><path d="m1172 436 3-1 1-2 7 1v2l-3 3-8 1zM844 507l3 2 2-1 4 11-3 2-4-3zM913 521l4-1 1-1 8 1-1 3-9 2zM1088 495l7-2 0 4-7 2zM1036 519l6-2v4l-6 1zM1032 520l2 2-3 1z"/></g>
      <path d="M995 496c14 3 32-3 37-13l-35 10z" fill="#fff"/>
      <circle cx="987" cy="495" r="5.800" fill="#fff"/>
      <path d="M792 397 754 408M1003 490 1042 480M993 498l7 6" stroke="#8f5a18" stroke-width="3.500"/>
      <path d="M792 397 754 408M1003 490 1042 480M993 498l7 6" stroke="#e8a040" stroke-width="2"/>
      <path d="M745 411 756 403 758 412zM1051 476 1039 474 1044 483zM1002 508l-4-3 5-5z" fill="#de922c" stroke="#5c3a10"/>
      <path d="m1014 574-7-24" stroke="#1414f0" stroke-width="1.500"/>
      <path d="m1007 544-1 9h6zM1010 572l9 5M1010 578l8-6M1014 570v9" fill="#1414f0" stroke="#1414f0"/>
      <g font-family="Liberation Sans, sans-serif" font-size="10" fill="#111"><text x="1065" y="472">Y</text><text x="1006" y="509">X</text></g>
      <path d="M794 395h7M797.500 391v7" stroke="#6cb4e8"/>
      <path d="M798 395v17l4-4 3 5 3-2-3-5h5z" fill="#fff" stroke="#222"/>
      <path d="m284 949-6-20" stroke="#1d7a16" stroke-width="4"/><path d="m276 920-2 11 9-2z" fill="#1d7a16"/>
      <path d="m284 949-20 6" stroke="#1a1ae0" stroke-width="4"/><path d="m255 958 9-7 3 8z" fill="#1414d0"/>
      <circle cx="289" cy="952" r="4.500" fill="#8e2a14"/><path d="M282 947h5v4z" fill="#4c1410"/>
      <g font-family="Liberation Mono, monospace" font-size="11"><text x="271" y="919" fill="#1d9a16">Y</text><text x="248" y="963" fill="#1414f0">Z</text><text x="287" y="958" fill="#e02a18">X</text></g>
    </svg>

    <nav class="crumbs">
      <div class="crumb-row"><svg class="i18"><use href="#i-part"/></svg><svg class="i18"><use href="#i-solid"/></svg><svg class="i18"><use href="#i-revolve"/></svg><span>旋转2</span>
        <svg class="chev" viewBox="0 0 45 25"><path d="M1 .500h43v23H1l10-11z" fill="none" stroke="#8aa8d8"/><path d="M15.500 5.500h13v13h-13z" fill="url(#steel)" stroke="#4c7ba0"/></svg></div>
      <div class="crumb-row sub"><svg class="turn" viewBox="0 0 12 14"><path d="M.500.500h4v7h3v-3l4 4-4 4v-2h-7z" fill="#fff" stroke="#888"/></svg><svg class="i18"><use href="#i-sketch-thin"/></svg><span>草图1</span></div>
    </nav>

    <div class="context">
      <div class="ctx-row">
        <button aria-label="编辑特征"><svg><use href="#i-editfeat"/></svg></button><button aria-label="编辑草图"><svg><use href="#i-editsk"/></svg></button><button aria-label="粘贴"><svg><use href="#i-paste"/></svg></button><button aria-label="压缩"><svg><use href="#i-suppress"/></svg></button><button aria-label="退回"><svg><use href="#i-rollback"/></svg></button><button aria-label="外观"><svg><use href="#i-ballpen"/></svg></button><svg class="caret"><use href="#i-down"/></svg><button aria-label="复制外观"><svg><use href="#i-balls"/></svg></button>
      </div>
      <div class="ctx-row">
        <button aria-label="选择其它"><svg><use href="#i-selother"/></svg></button><button aria-label="草图绘制"><svg><use href="#i-sknew"/></svg></button><button aria-label="配合"><svg><use href="#i-mate"/></svg></button><button aria-label="放大所选"><svg><use href="#i-zoomsel"/></svg></button><button aria-label="正视于"><svg><use href="#i-normal"/></svg></button><button aria-label="圆角"><svg><use href="#i-topface"/></svg></button><button aria-label="倒角"><svg><use href="#i-sideface"/></svg></button>
      </div>
    </div>

    <nav class="taskpane">
      <button aria-label="资源"><svg><use href="#i-home"/></svg></button><button aria-label="设计库"><svg><use href="#i-books"/></svg></button><button aria-label="文件"><svg><use href="#i-folderopen"/></svg></button><button aria-label="视图调色板"><svg><use href="#i-palette"/></svg></button><button aria-label="外观"><svg><use href="#i-ball"/></svg></button><button aria-label="自定义属性"><svg><use href="#i-props"/></svg></button><button aria-label="论坛"><svg><use href="#i-chat"/></svg></button>
    </nav>

    <section class="notice">
      <div class="notice-head"><h2>未保存的文档通知:</h2><button aria-label="关闭通知"><svg><use href="#i-close"/></svg></button></div>
      <div class="notice-body"><svg class="i18"><use href="#i-save"/></svg><p>至少还未保存文档 20 分钟.</p></div>
      <a href="#save">保存文档</a>
      <div class="ime">
        <svg class="sogou" viewBox="0 0 28 28"><rect x="2" y="2" width="24" height="24" rx="4" fill="#f05a28" transform="rotate(-10 14 14)"/><path d="M21 7c-8-2-14 1-12 4s12 1 11 5-9 4-13 3" fill="none" stroke="#fff" stroke-width="3.500"/></svg>
        <b>中</b><svg><use href="#i-moon"/></svg><svg><use href="#i-punct"/></svg><svg class="kb"><use href="#i-kb"/></svg><svg><use href="#i-person"/></svg><svg><use href="#i-shirt"/></svg><svg><use href="#i-wrench"/></svg>
      </div>
    </section>
  </section>
</main>

<nav class="bottomtabs"><span class="block"></span><button class="current">模型</button><button>3D 视图</button><button>运动算例 1</button></nav>
<footer class="status"><span class="grow">零件1</span><span class="editing">在编辑 零件</span><span class="custom">自定义</span><svg class="caret up"><use href="#i-down"/></svg><svg class="tag" viewBox="0 0 18 14"><path d="m1 4 9-3 7 4-3 6-4 2-8-5z" fill="#fff" stroke="#333"/><path d="m3 5 7 4 6-4M10 9v4" fill="none" stroke="#333"/><circle cx="7" cy="4" r="1.500" fill="none" stroke="#333"/></svg></footer>
</body>
</html>
```
FILE: styles.css
```css
* { box-sizing: border-box; }
body {
  margin: 0;
  min-height: 100vh;
  display: flex;
  flex-direction: column;
  border: 1px solid #000;
  background: #fbfdfc;
  color: #111;
  font: 12px/16px "Noto Sans CJK SC", sans-serif;
}
button { border: 0; padding: 0; background: none; font: inherit; color: inherit; display: flex; align-items: center; justify-content: center; }
svg { display: block; flex: none; }
h1, h2, p, ul { margin: 0; padding: 0; font: inherit; list-style: none; }
.sprite { position: absolute; width: 0; height: 0; }
.caret, .dd svg, .caret-box svg { width: 8px; height: 5px; color: #0c2350; }
.i18 { width: 18px; height: 18px; }
.serif-a { font-family: "Liberation Serif", serif; font-weight: bold; fill: #1b6cb5; }

/* title bar */
.titlebar { display: flex; height: 31px; border-bottom: 1px solid #989598; }
.brand { position: relative; z-index: 1; display: flex; align-items: center; gap: 5px; width: 146px; height: 35px; margin-left: 10px; padding-left: 5px; background: #fbfdfc; border: 1px solid #989598; border-top: 0; }
.ds { width: 27px; height: 28px; margin-bottom: 5px; }
.wordmark { font: italic 17px/20px "Open Sans", sans-serif; color: #d8301f; margin-bottom: -4px; }
.expand { width: 20px; border-right: 1px solid #989598; }
.expand::before { content: ""; border: 7px solid transparent; border-left-color: #555; border-right: 0; }
.quick { display: flex; align-items: center; margin-left: 29px; }
.q { width: 25px; height: 27px; }
.q svg { width: 20px; height: 18px; }
.dd { width: 14px; height: 26px; }
.pick { display: flex; border: 1px solid #989598; }
.pick .q { height: 25px; }
.pick .q svg { height: 20px; }
.pick .dd { width: 13px; height: 25px; }
.q.on { background: #989598; }
.q.wide { width: 27px; }
.doc-title { flex: 1; text-align: center; line-height: 32px; }
.title-end { display: flex; align-items: center; }
.search { display: flex; align-items: center; width: 202px; height: 23px; margin-right: 3px; padding: 0 4px; border: 1px solid #000; }
.q-mark { width: 17px; height: 17px; border: 1px solid #333; border-radius: 50%; text-align: center; font: bold 13px/15px "Open Sans", sans-serif; color: #1b6cb5; }
.search input { width: 144px; padding: 0 0 0 4px; border: 0; outline: 0; background: none; font: inherit; color: #555; }
.search input::placeholder { color: #666; opacity: 1; }
.search .caret { margin-left: 4px; }
.wb { width: 26px; height: 27px; color: #666; }
.wb svg { width: 14px; height: 14px; }
.wb.user svg { height: 20px; }
.help { font: bold 20px/24px "Open Sans", sans-serif; }

/* ribbon */
.ribbon { display: flex; height: 87px; padding: 6px 0 3px 6px; border-bottom: 1px solid #989598; }
.big { flex-direction: column; justify-content: flex-start; width: 46px; padding-top: 5px; line-height: 13px; }
.big > svg { width: 18px; height: 18px; margin-bottom: 1px; }
.big > span { height: 26px; white-space: nowrap; }
.big.noicon { padding-top: 24px; }
.caret-box { margin-top: 14px; }
.big.mid { padding-top: 12px; }
.big.mid.noicon { padding-top: 31px; }
.off, .off .caret, .off .caret-box svg, .dim.caret { color: #aaa; }
.off .caret { color: #888; }
.big.active { width: 60px; padding-top: 11px; background: #989598; border: 1px solid #6b686b; }
.big.snap { width: 50px; }
.tools { display: grid; grid-template: repeat(3, 26px) / 32px 8px 32px 8px 32px 8px 32px 20px; align-items: center; justify-items: center; margin-right: 6px; }
.tools button svg { width: 19px; height: 19px; }
.letter { height: 24px; font: 24px/24px "Liberation Serif", serif; color: #fbfdfc; -webkit-text-stroke: 1px #1b6cb5; }
.rule { width: 1px; height: 19px; margin: 4px 16px 0 11px; background: #989598; }
.lines { width: 108px; display: grid; grid-template-rows: repeat(3, 26px); }
.lines button { justify-content: space-between; }
.relations { width: 70px; }

/* command tabs and view toolbar */
.tabrow { display: flex; height: 22px; }
.tabs { display: flex; border-bottom: 1px solid #989598; }
.tabs button { min-width: 56px; padding: 0 6px; border-right: 1px solid #989598; white-space: nowrap; line-height: 20px; align-items: flex-start; }
.hud { display: flex; align-items: center; height: 30px; margin-left: 168px; }
.hud button { width: 26px; }
.hud button svg { width: 18px; height: 18px; }
.hud > .caret { margin: 0 3px; color: #777; }
.docwin { display: flex; height: 30px; margin-left: auto; padding-right: 7px; color: #989598; }
.docwin button { width: 26px; }
.docwin svg { width: 14px; height: 14px; }

/* feature tree */
.work { flex: 1; display: flex; min-height: 0; border-right: 1px solid #989598; }
.side { position: relative; width: 243px; border-right: 1px solid #989598; border-top: 1px solid #989598; }
.grip { height: 23px; line-height: 23px; text-align: center; font-size: 9px; color: #777; }
.sidetabs { display: flex; height: 26px; margin: 0 2px; border-top: 1px solid #989598; }
.sidetabs > button { width: 40px; border-right: 1px solid #989598; border-bottom: 1px solid #989598; }
.sidetabs > button.current { border-bottom-color: transparent; }
.sidetabs svg { width: 18px; height: 18px; }
.scroll { flex: 1; display: flex; margin-top: 5px; color: #555; }
.scroll button { flex: 1; border: 1px solid #989598; font-size: 10px; }
.scroll .blue { color: #1b6cb5; }
.filter { height: 26px; padding: 5px 7px; }
.root { display: flex; align-items: center; gap: 4px; height: 22px; padding-left: 5px; white-space: nowrap; }
.tree li { display: flex; align-items: center; height: 22px; padding-left: 9px; }
.tw { width: 15px; margin-right: -15px; }
.tw::before { content: ""; display: block; width: 0; border: 4px solid transparent; border-left: 5px solid #777; border-right: 0; }
.tw.open::before { border: 4px solid transparent; border-top: 5px solid #777; border-bottom: 0; }
.node { display: flex; align-items: center; gap: 5px; height: 22px; margin-left: 15px; padding: 0 3px 0 2px; border: 1px solid transparent; }
.node svg { width: 18px; height: 18px; }
.node.selected { background: #a6cfe4; border-color: #5b93b5; }
.child .node { margin-left: 38px; }
.rollbar { height: 4px; margin: 0 1px; background: #3586c9; }
.handle { position: absolute; left: 242px; top: 400px; z-index: 1; width: 9px; height: 40px; border: 1px solid #989598; border-left: 0; background: #fbfdfc; font-size: 8px; color: #555; }

/* graphics area */
.view { position: relative; flex: 1; min-width: 0; }
.scene { position: absolute; inset: 0; width: 100%; height: 100%; }
.crumbs { position: absolute; left: 27px; top: 16px; }
.crumb-row { display: flex; align-items: center; gap: 14px; height: 25px; font-size: 11px; }
.crumb-row .i18 { opacity: .75; }
.crumb-row span { margin-left: -7px; color: #000; }
.chev { width: 45px; height: 25px; margin-left: -14px; }
.sub { height: 34px; padding-left: 86px; gap: 8px; }
.sub span { margin-left: -1px; }
.turn { width: 12px; height: 14px; }
.context { position: absolute; left: 594px; top: 146px; width: 236px; height: 68px; padding: 3px; border: 1px solid #989598; background: rgba(251, 253, 252, .6); }
.ctx-row { display: flex; align-items: center; height: 30px; opacity: .7; }
.ctx-row button { width: 30px; height: 30px; }
.ctx-row button svg { width: 19px; height: 19px; }
.ctx-row > .caret { margin: 0 3px; color: #555; }
.taskpane { position: absolute; right: -1px; top: 28px; width: 26px; border: 1px solid #989598; border-width: 1px 0 0 1px; background: #fbfdfc; }
.taskpane button { width: 25px; height: 24px; border-bottom: 1px solid #989598; }
.taskpane svg { width: 18px; height: 18px; }

.notice { position: absolute; right: 3px; bottom: 3px; width: 321px; height: 85px; padding: 0 5px; border: 1px solid #000; background: #fbfdfc; }
.notice-head { display: flex; justify-content: space-between; height: 20px; font-weight: bold; }
.notice-head button { width: 14px; height: 22px; color: #d8301f; }
.notice-head svg { width: 14px; height: 14px; }
.notice-body { display: flex; align-items: center; gap: 18px; height: 22px; padding-left: 3px; }
.notice a { display: block; margin: 15px 0 0 32px; color: #00e; }
.ime { position: absolute; left: 101px; top: 49px; display: flex; align-items: center; width: 166px; height: 24px; padding-left: 14px; border: 1px solid #a5cbe4; background: #fbfdfc; }
.ime b { width: 22px; text-align: center; font-size: 15px; color: #1f74c4; }
.ime svg { width: 14px; height: 14px; margin: 0 4px; }
.ime .kb { width: 18px; margin: 0 2px; }
.ime .sogou { position: absolute; left: -21px; top: -3px; width: 28px; height: 28px; margin: 0; }

/* bottom tabs and status bar */
.bottomtabs { display: flex; height: 16px; border: 1px solid #989598; border-left: 0; line-height: 12px; }
.block { width: 67px; background: #989598; }
.bottomtabs button { padding: 0 6px 0 7px; border-right: 1px solid #989598; align-items: flex-start; }
.bottomtabs .current { width: 46px; }
.bottomtabs button:last-child { padding-right: 16px; }
.status { display: flex; align-items: center; height: 18px; padding: 0 2px; }
.grow { flex: 1; }
.editing { width: 116px; }
.custom { width: 52px; }
.up { transform: rotate(180deg); margin-right: 65px; }
.tag { width: 18px; height: 14px; }
```
